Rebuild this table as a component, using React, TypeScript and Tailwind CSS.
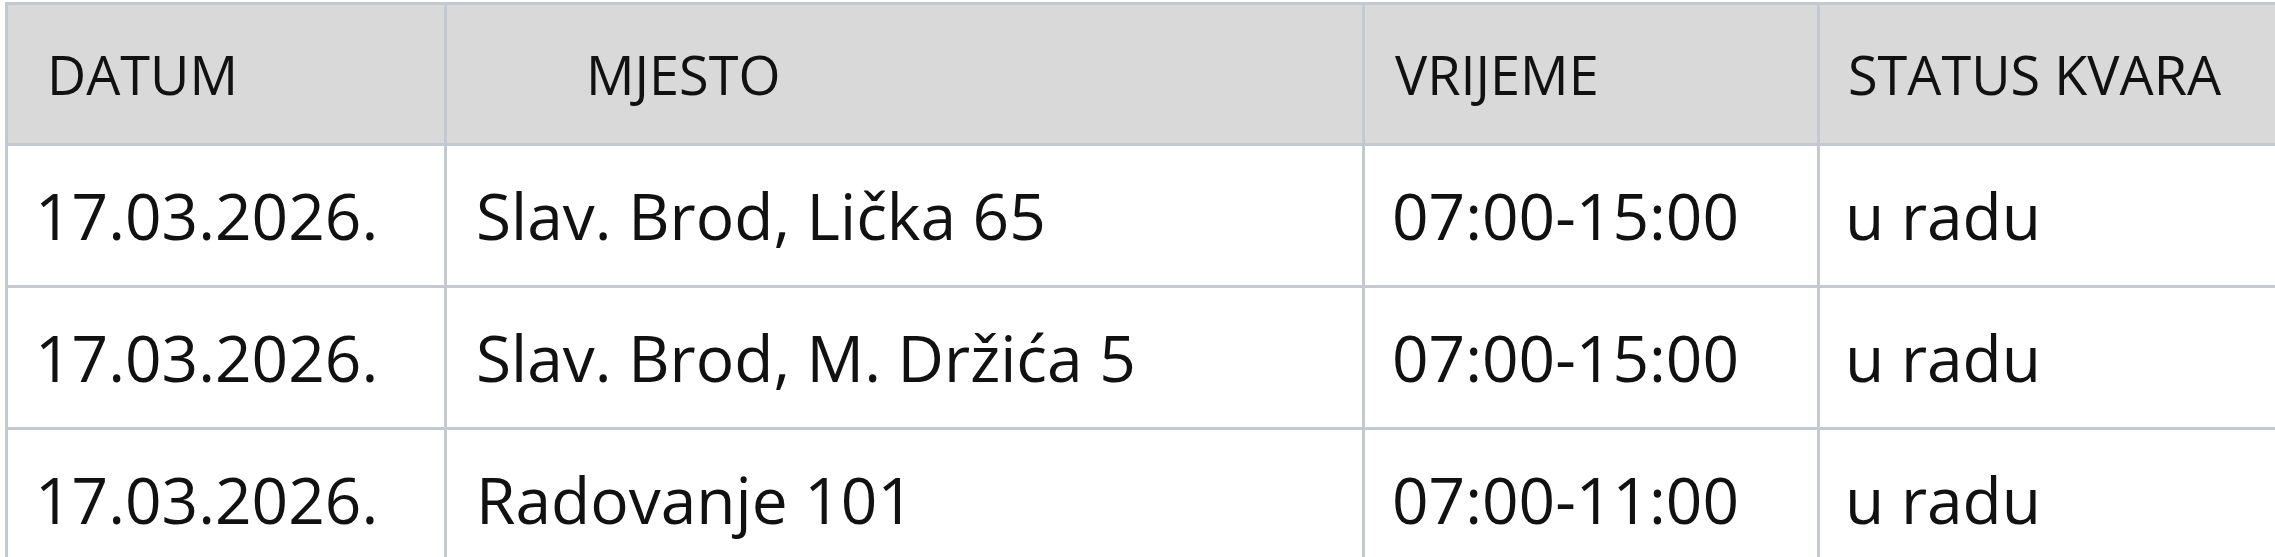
const COLS = [
  { label: "DATUM", head: "pl-[39px]", body: "pl-[27px]", w: "w-[439px]" },
  { label: "MJESTO", head: "pl-[139px]", body: "pl-[29px]", w: "w-[918px]" },
  { label: "VRIJEME", head: "pl-[30px]", body: "pl-[27px]", w: "w-[455px]" },
  { label: "STATUS KVARA", head: "pl-[28px]", body: "pl-[25px]", w: "w-[470px]" },
];

const ROWS = [
  ["17.03.2026.", "Slav. Brod, Lička 65", "07:00-15:00", "u radu"],
  ["17.03.2026.", "Slav. Brod, M. Držića 5", "07:00-15:00", "u radu"],
  ["17.03.2026.", "Radovanje 101", "07:00-11:00", "u radu"],
];

export default function App() {
  return (
    <div
      className="w-[2275px] h-[557px] overflow-hidden bg-white pl-[5px] pt-[2px] text-[#111]"
      style={{ fontFamily: '"Open Sans", "Noto Sans", sans-serif' }}
    >
      <div className="flex w-max flex-col border-l-[3px] border-t-[3px] border-[#c4c8d0]">
        {/* header */}
        <div className="flex h-[141px] bg-[#d9d9d9]">
          {COLS.map((c) => (
            <div
              key={c.label}
              className={`${c.w} ${c.head} flex shrink-0 items-center border-b-[3px] border-r-[3px] border-[#c4c8d0] text-[54px] font-medium leading-none`}
            >
              {c.label}
            </div>
          ))}
        </div>

        {ROWS.map((row, i) => (
          <div key={i} className="flex h-[142px] bg-white">
            {row.map((cell, j) => (
              <div
                key={j}
                className={`${COLS[j].w} ${COLS[j].body} flex shrink-0 items-center border-b-[3px] border-r-[3px] border-[#c4c8d0] text-[64px] font-medium leading-none`}
              >
                {cell}
              </div>
            ))}
          </div>
        ))}
      </div>
    </div>
  );
}
